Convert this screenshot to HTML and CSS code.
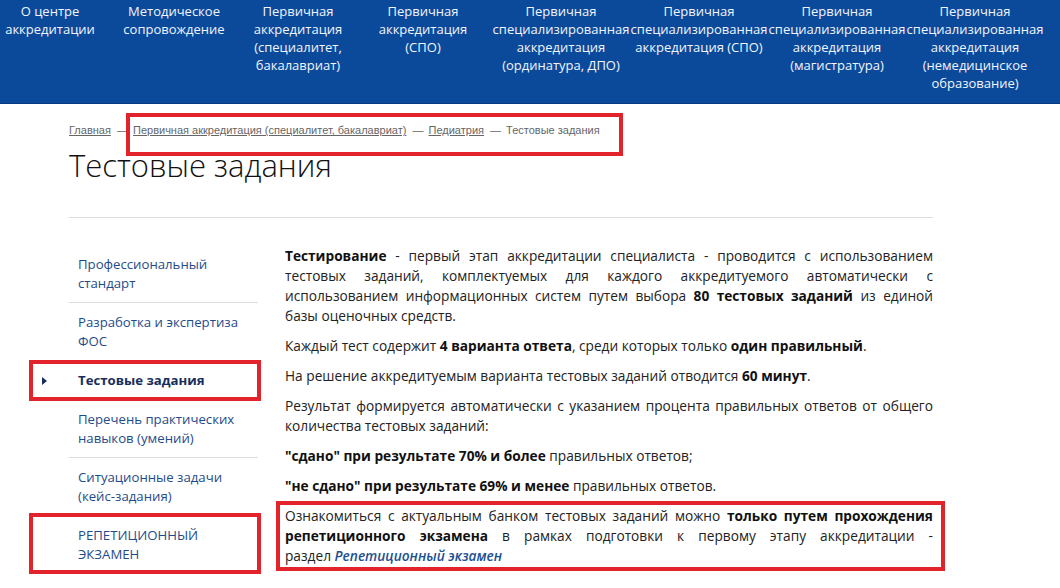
FILE: index.html
```html
<!DOCTYPE html>
<html lang="ru">
<head>
    <meta charset="UTF-8">
    <meta name="viewport" content="width=device-width, initial-scale=1.0">
    <title>Тестовые задания</title>
    <link rel="stylesheet" href="styles.css">
</head>
<body>
    <header class="top-nav">
        <nav class="menu">
            <a class="menu-item" href="#">О центре аккредитации</a>
            <a class="menu-item" href="#">Методическое сопровождение</a>
            <a class="menu-item" href="#">Первичная аккредитация (специалитет, бакалавриат)</a>
            <a class="menu-item" href="#">Первичная аккредитация (СПО)</a>
            <a class="menu-item" href="#">Первичная специализированная аккредитация (ординатура, ДПО)</a>
            <a class="menu-item" href="#">Первичная специализированная аккредитация&nbsp;(СПО)</a>
            <a class="menu-item" href="#">Первичная специализированная аккредитация (магистратура)</a>
            <a class="menu-item" href="#">Первичная специализированная аккредитация (немедицинское образование)</a>
        </nav>
    </header>

    <div class="page">
        <div class="crumbs">
            <a href="#">Главная</a>
            <span class="dash">—</span>
            <span class="marked mark-crumbs">
                <a href="#">Первичная аккредитация (специалитет, бакалавриат)</a>
                <span class="dash">—</span>
                <a href="#">Педиатрия</a>
                <span class="dash">—</span>
                <span class="current">Тестовые задания</span>
            </span>
        </div>

        <h1 class="page-title">Тестовые задания</h1>

        <div class="layout">
            <aside class="side-menu">
                <ul>
                    <li><a href="#">Профессиональный стандарт</a></li>
                    <li><a href="#">Разработка и экспертиза ФОС</a></li>
                    <li class="active marked mark-active"><a href="#">Тестовые задания</a></li>
                    <li><a href="#">Перечень практических навыков (умений)</a></li>
                    <li><a href="#">Ситуационные задачи (кейс-задания)</a></li>
                    <li class="marked mark-exam"><a href="#">РЕПЕТИЦИОННЫЙ ЭКЗАМЕН</a></li>
                </ul>
            </aside>

            <main class="content">
                <p><b>Тестирование</b> - первый этап аккредитации специалиста - проводится с использованием тестовых заданий, комплектуемых для каждого аккредитуемого автоматически с использованием информационных систем путем выбора <b>80 тестовых заданий</b> из единой базы оценочных средств.</p>
                <p>Каждый тест содержит <b>4 варианта ответа</b>, среди которых только <b>один правильный</b>.</p>
                <p>На решение аккредитуемым варианта тестовых заданий отводится <b>60 минут</b>.</p>
                <p>Результат формируется автоматически с указанием процента правильных ответов от общего количества тестовых заданий:</p>
                <p><b>"сдано" при результате 70% и более</b> правильных ответов;</p>
                <p><b>"не сдано" при результате 69% и менее</b> правильных ответов.</p>
                <p class="marked mark-bank">Ознакомиться с актуальным банком тестовых заданий можно <b>только путем прохождения репетиционного экзамена</b> в рамках подготовки к первому этапу аккредитации - раздел&nbsp;<a class="inline-link" href="#">Репетиционный экзамен</a></p>
            </main>
        </div>
    </div>
</body>
</html>
```

FILE: styles.css
```css
body {
    margin: 0;
    font-family: "Open Sans", "Noto Sans", sans-serif;
    color: #222;
    background-color: #fff;
}
a {
    text-decoration: none;
    color: inherit;
}

/* top menu */
.top-nav {
    height: 104px;
    background-color: #0b4a9b;
    border-bottom: 1px solid #083c82;
    box-sizing: border-box;
}
.menu {
    display: grid;
    grid-template-columns: 112px 124px 124px 132px 138px 138px 138px 138px;
    padding-top: 2px;
}
.menu-item {
    color: #f2f5fb;
    font-size: 13px;
    line-height: 18px;
    text-align: center;
}
.menu-item:first-child {
    padding-right: 12px;
}
.menu-item:nth-child(4) {
    padding-right: 6px;
}

/* page */
.page {
    width: 864px;
    margin-left: 69px;
}
.crumbs {
    margin-top: 19px;
    font-family: "Liberation Sans", Arial, sans-serif;
    font-size: 11px;
    line-height: 14px;
    color: #666;
}
.crumbs a {
    text-decoration: underline;
}
.crumbs .dash {
    margin: 0 2px 0 3px;
}
.page-title {
    margin: 8px 0 0;
    font-size: 31px;
    font-weight: 300;
    line-height: 40px;
    color: #111;
    padding-bottom: 32px;
    border-bottom: 1px solid #ddd;
}

.layout {
    display: flex;
    gap: 27px;
    margin-top: 27px;
}

/* side menu */
.side-menu {
    width: 189px;
    flex-shrink: 0;
}
.side-menu ul {
    list-style: none;
    margin: 0;
    padding: 0;
}
.side-menu li {
    padding: 10px 0 9px 9px;
    font-size: 13.2px;
    line-height: 19px;
    color: #1f4b8a;
    border-bottom: 1px solid #ddd;
}
.side-menu li:last-child {
    border-bottom: none;
}
.side-menu li.active {
    font-weight: 700;
    color: #172e5c;
}
.side-menu li.active::before {
    content: "";
    position: absolute;
    left: -27px;
    top: 16px;
    border-left: 5px solid #172e5c;
    border-top: 4px solid transparent;
    border-bottom: 4px solid transparent;
}

/* content */
.content {
    flex: 1;
    padding-top: 1px;
    font-size: 13.7px;
    line-height: 20px;
    color: #222;
}
.content p {
    margin: 0 0 10px;
    text-align: justify;
}
.content b {
    font-weight: 700;
    color: #111;
}
.inline-link {
    font-style: italic;
    font-weight: 600;
    color: #1d4f91;
}

/* red annotation frames */
.marked {
    position: relative;
}
.marked::after {
    content: "";
    position: absolute;
    border: 4px solid #e2232b;
    pointer-events: none;
}
.mark-crumbs::after {
    top: -11px;
    right: -23px;
    bottom: -20px;
    left: -7px;
}
.mark-active::after {
    top: -1px;
    right: -3px;
    bottom: -2px;
    left: -40px;
}
.mark-exam::after {
    top: -3px;
    right: -3px;
    bottom: -1px;
    left: -40px;
}
.mark-bank::after {
    top: -5px;
    right: -12px;
    bottom: -5px;
    left: -9px;
}
```
